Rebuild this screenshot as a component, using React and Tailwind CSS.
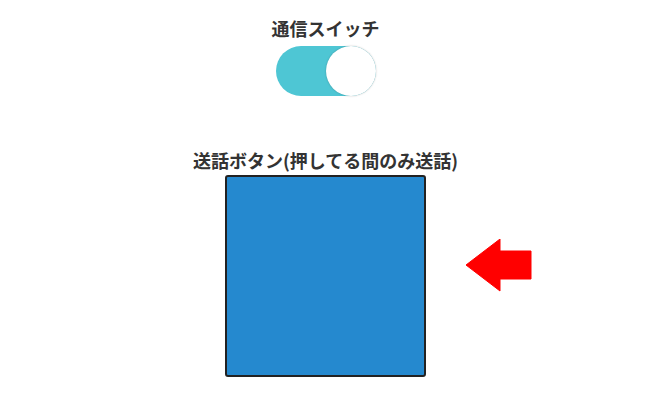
import React, { useState } from 'react';

const font = { fontFamily: '"Noto Sans CJK JP", "Noto Sans", sans-serif' };

const App = () => {
  const [on, setOn] = useState(true);
  const [talking, setTalking] = useState(false);

  return (
    <div className="min-h-screen bg-white flex flex-col items-center pt-[15px]" style={font}>
      <h2 className="text-[18px] leading-[27px] font-bold text-[#333]">通信スイッチ</h2>

      {/* toggle */}
      <button
        onClick={() => setOn(!on)}
        className={`mt-[4px] w-[100px] h-[50px] rounded-full flex ${on ? 'justify-end bg-[#4ec6d4]' : 'justify-start bg-[#ccc]'}`}
      >
        <span className="w-[50px] h-[50px] rounded-full bg-white shadow-[0_0_2px_rgba(0,0,0,0.25)]" />
      </button>

      <h2 className="mt-[51px] text-[18px] leading-[27px] font-bold text-[#333]">送話ボタン(押してる間のみ送話)</h2>

      <div className="relative mt-[1px]">
        <button
          onMouseDown={() => setTalking(true)}
          onMouseUp={() => setTalking(false)}
          onMouseLeave={() => setTalking(false)}
          className={`block w-[201px] h-[202px] border-2 border-[#222] rounded-[3px] ${talking ? 'bg-[#1a6ea8]' : 'bg-[#2589cf]'}`}
        />
        <svg className="absolute left-full top-[64px] ml-[40px]" width="66" height="53" viewBox="0 0 66 53">
          <polygon points="0,26 34,0 34,12 65,12 65,40 34,40 34,52" fill="#ff0000" strokeLinejoin="round" stroke="#ff0000" strokeWidth="1" />
        </svg>
      </div>
    </div>
  );
};

export default App;
